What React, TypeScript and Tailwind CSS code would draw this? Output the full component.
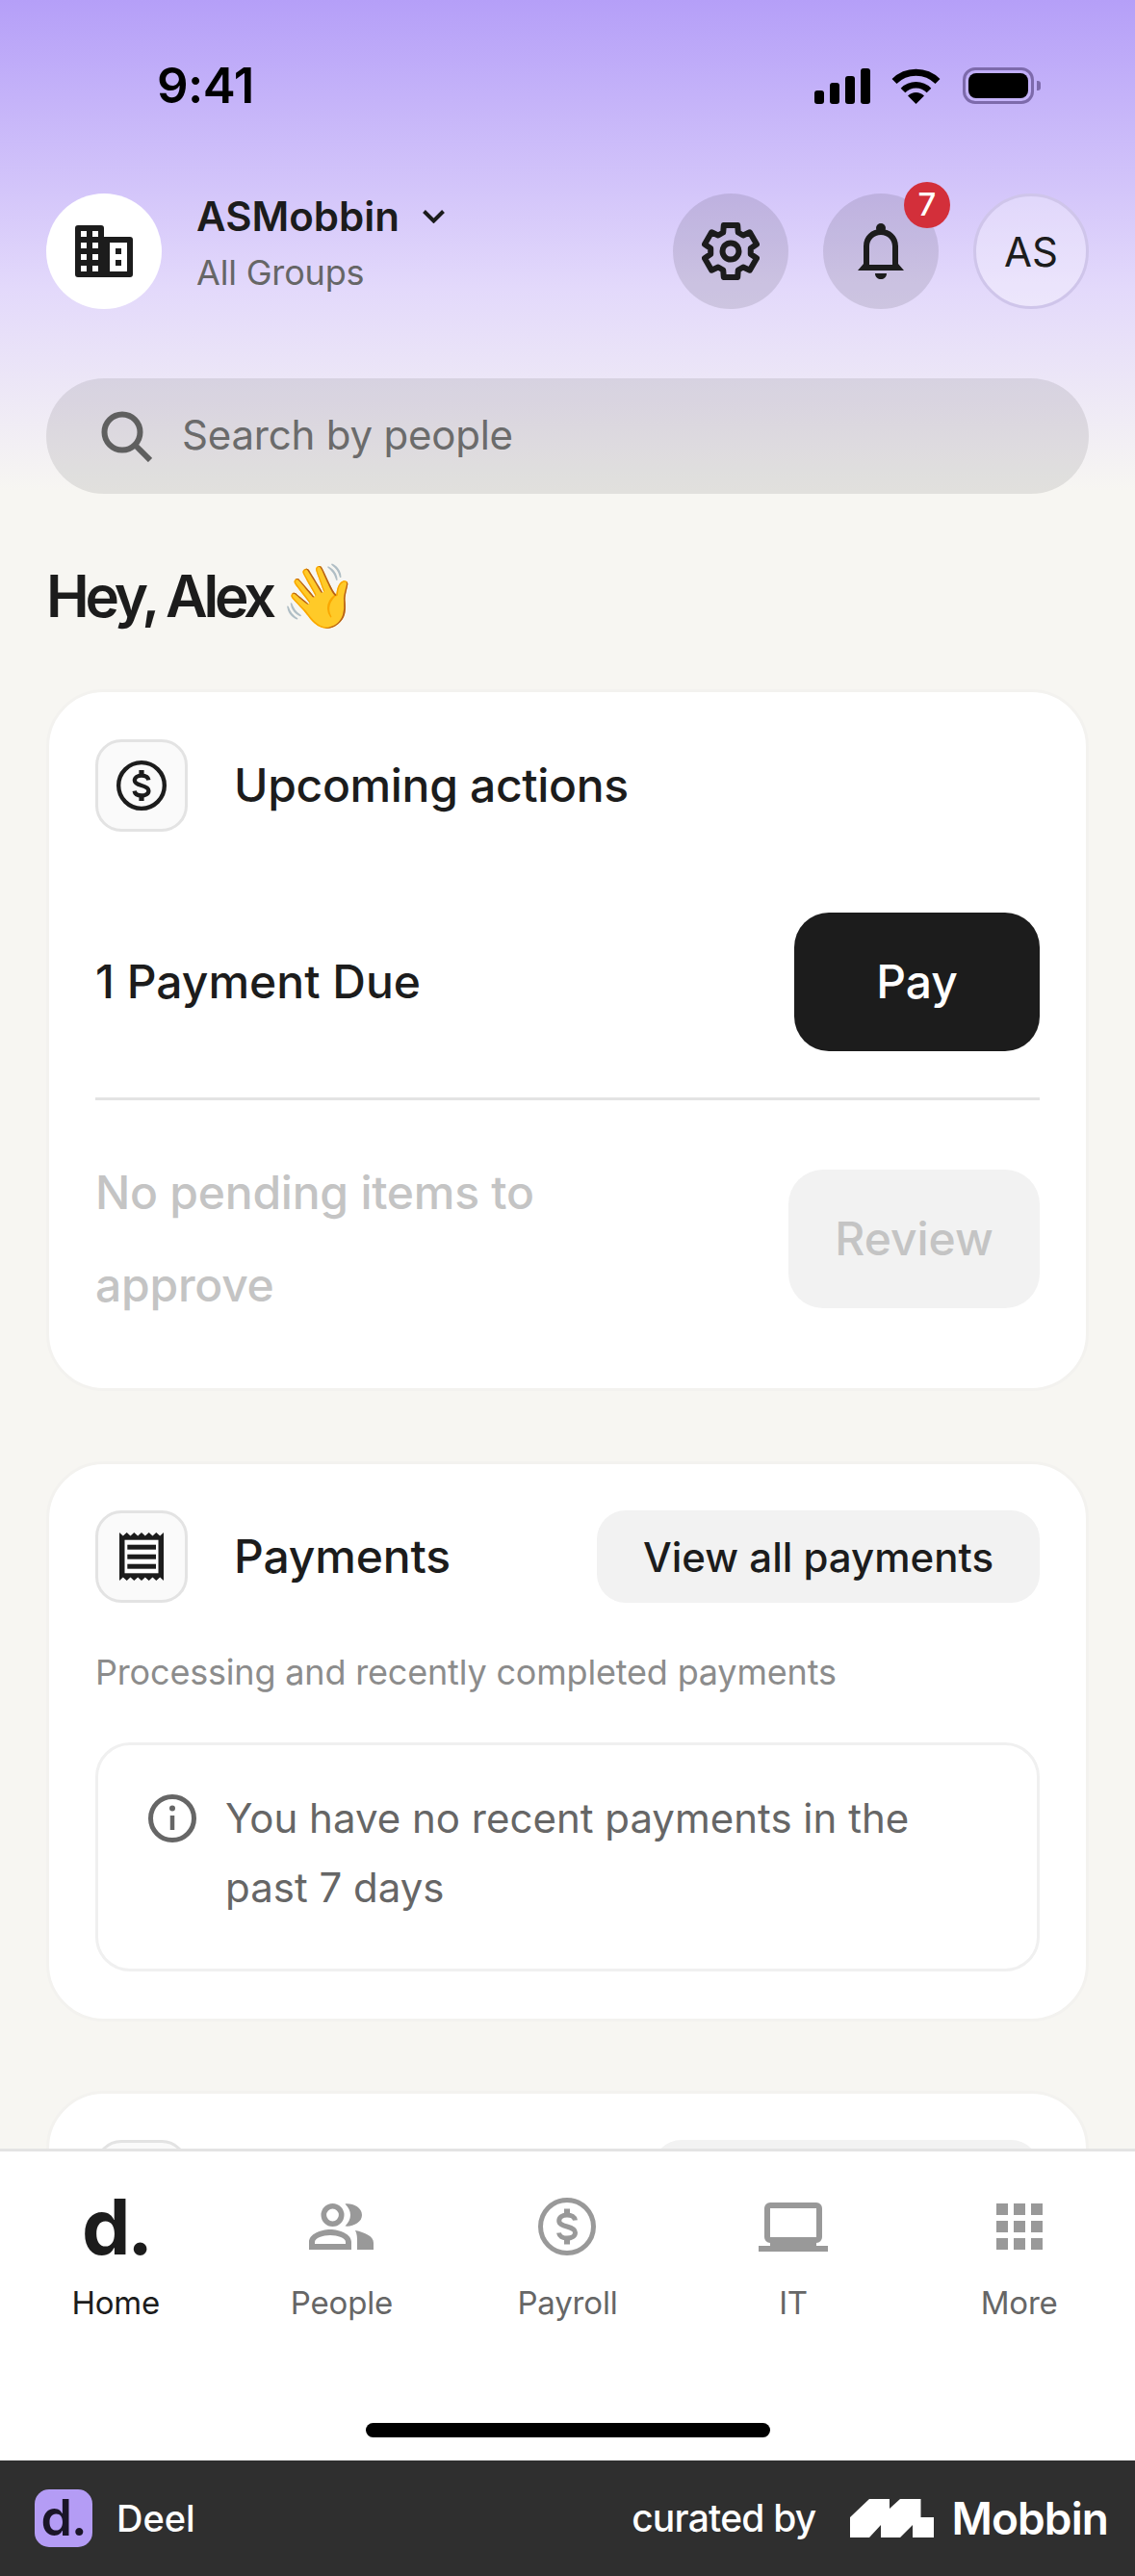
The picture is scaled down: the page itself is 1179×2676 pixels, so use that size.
import React from "react";

const gearPoints = () => {
  const pts: string[] = [];
  const outer = 28;
  const inner = 21;
  for (let i = 0; i < 6; i++) {
    const a = (-90 + i * 60) * (Math.PI / 180);
    const spread = 0.26;
    const spreadIn = 0.38;
    const p = (r: number, t: number) => `${(30 + r * Math.cos(t) * 1.0).toFixed(2)},${(30 + r * Math.sin(t)).toFixed(2)}`;
    pts.push(p(inner, a - spreadIn), p(outer, a - spread), p(outer, a + spread), p(inner, a + spreadIn));
  }
  return pts.join(" ");
};

function Gear() {
  return (
    <svg width="60" height="60" viewBox="0 0 60 60" fill="none" stroke="#1c1c1c" strokeWidth="6" strokeLinejoin="round">
      <polygon points={gearPoints()} />
      <circle cx="30" cy="30" r="8.5" />
    </svg>
  );
}

function Bell() {
  return (
    <svg width="48" height="58" viewBox="0 0 48 58" fill="#1c1c1c">
      <circle cx="24" cy="5" r="5" />
      <path fillRule="evenodd" d="M0 49 L6 42 V24 C6 13 14 6 24 6 C34 6 42 13 42 24 V42 L48 49 Z M12 43 H36 V24 C36 17 31 12 24 12 C17 12 12 17 12 24 Z" />
      <path d="M18 52 H30 C30 56 27 58 24 58 C21 58 18 56 18 52 Z" />
    </svg>
  );
}

function Building() {
  const white: [number, number, number, number][] = [
    [6, 6, 6, 6], [18, 6, 6, 6],
    [6, 18, 6, 6], [18, 18, 6, 6],
    [6, 30, 6, 6], [18, 30, 6, 6],
    [6, 42, 6, 6], [18, 42, 6, 6],
  ];
  return (
    <svg width="60" height="54" viewBox="0 0 60 54">
      <path fill="#1c1c1c" d="M0 3 a3 3 0 0 1 3-3 h24 a3 3 0 0 1 3 3 v9 h27 a3 3 0 0 1 3 3 v36 a3 3 0 0 1-3 3 H3 a3 3 0 0 1-3-3 z" />
      {white.map(([x, y, w, h]) => (
        <rect key={`${x}-${y}`} x={x} y={y} width={w} height={h} fill="#fff" />
      ))}
      <rect x="30" y="18" width="24" height="30" fill="#fff" />
      <rect x="42" y="24" width="6" height="6" fill="#1c1c1c" />
      <rect x="42" y="36" width="6" height="6" fill="#1c1c1c" />
      <rect x="30" y="18" width="6" height="30" fill="#1c1c1c" />
    </svg>
  );
}

function Dollar({ size, color }: { size: number; color: string }) {
  return (
    <svg width={size} height={size} viewBox="0 0 24 24" fill="none" stroke={color}>
      <circle cx="12" cy="12" r="11" strokeWidth="2" />
      <path strokeWidth="2" d="M15.4 9.4 C15.2 8 13.8 7.2 12 7.2 C10.2 7.2 8.7 8.1 8.7 9.6 C8.7 11 10.2 11.5 12 12 C13.8 12.5 15.4 13.1 15.4 14.5 C15.4 16 13.8 16.8 12 16.8 C10.2 16.8 8.8 16 8.6 14.6" />
      <path strokeWidth="2.4" d="M12 4.6 V7.4 M12 16.6 V19.4" />
    </svg>
  );
}

function Receipt() {
  return (
    <svg width="46" height="50" viewBox="0 0 46 50">
      <path fill="#1c1c1c" d="M0 0 L3.8 3.5 L7.7 0 L11.5 3.5 L15.3 0 L19.2 3.5 L23 0 L26.8 3.5 L30.7 0 L34.5 3.5 L38.3 0 L42.2 3.5 L46 0 V50 L42.2 46.5 L38.3 50 L34.5 46.5 L30.7 50 L26.8 46.5 L23 50 L19.2 46.5 L15.3 50 L11.5 46.5 L7.7 50 L3.8 46.5 L0 50 Z" />
      <rect x="5.5" y="7.7" width="35" height="34.6" fill="#fff" />
      <rect x="8.3" y="12.7" width="29.7" height="5" fill="#1c1c1c" />
      <rect x="8.3" y="22.7" width="29.7" height="5" fill="#1c1c1c" />
      <rect x="8.3" y="32.7" width="29.7" height="5" fill="#1c1c1c" />
    </svg>
  );
}

function People() {
  return (
    <svg width="67" height="48" viewBox="0 0 67 48" fill="#999">
      <circle cx="24.5" cy="12" r="9.2" fill="none" stroke="#999" strokeWidth="5.6" />
      <path d="M37.5 0.5 C45 -0.5 55 4 55 12 C55 20 45 24.5 37.5 23.5 C41 20 43 16 43 12 C43 8 41 4 37.5 0.5 Z" />
      <path fillRule="evenodd" d="M0 48 V40 C0 32 12 27 22 27 C32 27 44 32 44 40 V48 Z M6 42 H38 V40 C38 36 30 33 22 33 C14 33 6 36 6 40 Z" />
      <path d="M48 28 C58 30 67 34 67 41 V48 H50 V40 C50 35 50 32 48 28 Z" />
    </svg>
  );
}

function Laptop() {
  return (
    <svg width="72" height="51" viewBox="0 0 72 51" fill="#999">
      <path fillRule="evenodd" d="M12 0 H60 A6 6 0 0 1 66 6 V36 A6 6 0 0 1 60 42 V45 H72 V51 H0 V45 H12 V42 A6 6 0 0 1 6 36 V6 A6 6 0 0 1 12 0 Z M12 6 V36 H60 V6 Z" />
    </svg>
  );
}

function Grid() {
  return (
    <div className="grid grid-cols-3 gap-[6px] w-[48px]">
      {Array.from({ length: 9 }).map((_, i) => (
        <div key={i} className="h-[12px] bg-[#999]" />
      ))}
    </div>
  );
}

function IconBox({ children }: { children: React.ReactNode }) {
  return (
    <div className="w-[96px] h-[96px] shrink-0 rounded-[27px] bg-[#fafafa] border-[3px] border-[#e3e3e3] flex items-center justify-center">
      {children}
    </div>
  );
}

function NavItem({ icon, label, active }: { icon: React.ReactNode; label: string; active?: boolean }) {
  return (
    <div className="flex-1 flex flex-col items-center">
      <div className="h-[60px] flex items-center justify-center">{icon}</div>
      <div className={`mt-[28px] text-[33px] leading-[42px] tracking-[-0.005em] ${active ? "text-[#1c1c1c]" : "text-[#666]"}`}>{label}</div>
    </div>
  );
}

export default function App() {
  return (
    <div className="w-[1179px] h-[2676px] flex flex-col overflow-hidden font-[family-name:Inter,sans-serif] text-[#1c1c1c] bg-white">
      <main className="h-[2232px] shrink-0 overflow-hidden px-[48px] bg-[#f7f6f2] bg-[linear-gradient(180deg,#b59ff8_0px,#e3d9fb_300px,#f7f6f2_510px)]">
        {/* status bar */}
        <div className="h-[201px]">
          <div className="flex items-center justify-between pt-[59px] pl-[115px] h-[119px]">
            <span className="text-[51px] leading-[60px] font-semibold tracking-[-0.01em] text-black">9:41</span>
            <div className="flex items-center">
              <div className="flex items-end gap-[6px] h-[37px]">
                <div className="w-[10px] h-[14px] rounded-[3px] bg-black" />
                <div className="w-[10px] h-[22px] rounded-[3px] bg-black" />
                <div className="w-[10px] h-[29px] rounded-[3px] bg-black" />
                <div className="w-[10px] h-[37px] rounded-[3px] bg-black" />
              </div>
              <svg className="ml-[22px]" width="51" height="37" viewBox="0 0 51 37" fill="none" stroke="#000">
                <path strokeWidth="7" d="M3 13.5 A32 32 0 0 1 48 13.5" />
                <path strokeWidth="6.5" d="M12 23 A19 19 0 0 1 39 23" />
                <path fill="#000" stroke="none" d="M25.5 37 L17 28.5 A12 12 0 0 1 34 28.5 Z" />
              </svg>
              <div className="ml-[23px] w-[74px] h-[38px] rounded-[13px] border-[3px] border-[#7d6aab] p-[3px]">
                <div className="w-full h-full rounded-[8px] bg-black" />
              </div>
              <div className="ml-[3px] w-[4px] h-[10px] rounded-r-[3px] bg-[#7d6aab]" />
              <div className="w-[50px]" />
            </div>
          </div>
        </div>

        {/* header */}
        <div className="flex items-center h-[120px]">
          <div className="w-[120px] h-[120px] rounded-full bg-white flex items-center justify-center">
            <Building />
          </div>
          <div className="ml-[36px] mb-[14px] flex flex-col">
            <div className="flex items-center h-[58px]">
              <span className="text-[42px] leading-[58px] font-semibold">ASMobbin</span>
              <svg className="ml-[24px]" width="23" height="14" viewBox="0 0 23 14" fill="none" stroke="#1c1c1c" strokeWidth="4">
                <path d="M1.5 1.5 L11.5 11.5 L21.5 1.5" />
              </svg>
            </div>
            <span className="text-[36px] leading-[58px] tracking-[-0.005em] text-[#666]">All Groups</span>
          </div>
          <div className="ml-auto flex items-center gap-[36px]">
            <div className="w-[120px] h-[120px] rounded-full bg-black/10 flex items-center justify-center">
              <Gear />
            </div>
            <div className="relative w-[120px] h-[120px] rounded-full bg-black/10 flex items-center justify-center">
              <Bell />
              <div className="absolute left-[84px] top-[-12px] w-[48px] h-[48px] rounded-full bg-[#d32f3a] text-white text-[33px] font-medium flex items-center justify-center">7</div>
            </div>
            <div className="w-[120px] h-[120px] rounded-full bg-white/30 border-[3px] border-[#cfc5ea] flex items-center justify-center text-[42px] font-normal">AS</div>
          </div>
        </div>

        {/* search */}
        <div className="mt-[72px] h-[120px] rounded-full bg-black/[.085] flex items-center pl-[57px]">
          <svg width="53" height="53" viewBox="0 0 53 53" fill="none" stroke="#5f5f5f" strokeWidth="6">
            <circle cx="22" cy="22" r="18.5" />
            <path d="M35 35 L51 51" />
          </svg>
          <span className="ml-[31px] mb-[4px] text-[42px] tracking-[-0.005em] text-[#6b6b6b]">Search by people</span>
        </div>

        {/* greeting */}
        <div className="mt-[61px] flex items-center h-[90px]">
          <span className="text-[60px] leading-[90px] font-semibold tracking-[-0.07em]">Hey, Alex</span>
          <span className="ml-[8px] text-[65px] leading-[90px]">👋</span>
        </div>

        {/* upcoming */}
        <section className="mt-[52px] bg-white border-[3px] border-[#f3f2ef] rounded-[60px] px-[48px] pt-[49px] pb-[59px]">
          <div className="flex items-center">
            <IconBox><Dollar size={52} color="#1c1c1c" /></IconBox>
            <h2 className="ml-[48px] text-[48px] font-[450] tracking-[-0.007em]">Upcoming actions</h2>
          </div>
          <div className="mt-[84px] pb-[48px] border-b-[3px] border-[#e3e3e3] flex items-center justify-between">
            <span className="text-[48px] font-[450]">1 Payment Due</span>
            <div className="w-[255px] h-[144px] rounded-[36px] bg-[#1c1c1c] text-white text-[48px] font-[450] flex items-center justify-center">Pay</div>
          </div>
          <div className="mt-[48px] flex items-center justify-between">
            <p className="w-[560px] text-[48px] leading-[96px] font-[450] tracking-[-0.005em] text-[#c4c4c4]">No pending items to approve</p>
            <div className="w-[261px] h-[144px] rounded-[36px] bg-[#f2f2f2] text-[#c4c4c4] text-[48px] font-[450] flex items-center justify-center">Review</div>
          </div>
        </section>

        {/* payments */}
        <section className="mt-[73px] bg-white border-[3px] border-[#f3f2ef] rounded-[60px] px-[48px] pt-[48px] pb-[49px]">
          <div className="flex items-center">
            <IconBox><Receipt /></IconBox>
            <h2 className="ml-[48px] text-[48px] font-[450] tracking-[-0.003em]">Payments</h2>
            <div className="ml-auto h-[96px] px-[48px] rounded-[30px] bg-[#f2f2f2] text-[42px] font-[450] flex items-center">View all payments</div>
          </div>
          <p className="mt-[48px] text-[36px] leading-[48px] tracking-[-0.005em] text-[#8c8c8c]">Processing and recently completed payments</p>
          <div className="mt-[49px] h-[238px] border-[3px] border-[#f0f0f0] rounded-[36px] flex pl-[52px] pr-[40px] pt-[40px]">
            <svg className="shrink-0 mt-[11px]" width="50" height="50" viewBox="0 0 50 50" fill="none" stroke="#666" strokeWidth="5">
              <circle cx="25" cy="25" r="22.5" />
              <path strokeWidth="4.5" d="M25 22 V37" />
              <circle cx="25" cy="14.5" r="3" fill="#666" stroke="none" />
            </svg>
            <p className="ml-[30px] text-[42px] leading-[72px] text-[#666]">You have no recent payments in the past 7 days</p>
          </div>
        </section>

        {/* clipped next card */}
        <section className="mt-[72px] bg-white border-[3px] border-[#f3f2ef] rounded-[60px] px-[48px] pt-[48px] pb-[49px]">
          <div className="flex items-center justify-between">
            <IconBox><span /></IconBox>
            <div className="w-[402px] h-[96px] rounded-[30px] bg-[#f2f2f2]" />
          </div>
        </section>
      </main>

      {/* tab bar */}
      <nav className="h-[324px] shrink-0 bg-white border-t-[3px] border-[#e3e3e3] flex flex-col justify-between">
        <div className="flex px-[3px] pt-[48px]">
          <NavItem active label="Home" icon={<span className="text-[80px] leading-[60px] font-bold tracking-[-0.04em] text-[#1c1c1c]">d.</span>} />
          <NavItem label="People" icon={<People />} />
          <NavItem label="Payroll" icon={<Dollar size={60} color="#999" />} />
          <NavItem label="IT" icon={<Laptop />} />
          <NavItem label="More" icon={<Grid />} />
        </div>
        <div className="self-center w-[420px] h-[15px] rounded-full bg-black mb-[24px]" />
      </nav>

      {/* footer */}
      <footer className="h-[120px] shrink-0 bg-[#2f2f2f] flex items-center justify-between pl-[36px] pr-[28px] text-white">
        <div className="flex items-center">
          <div className="w-[60px] h-[60px] rounded-[15px] bg-[#b49cf5] text-[#1a1528] text-[52px] leading-[60px] font-semibold tracking-[-0.02em] flex items-center justify-center">d.</div>
          <span className="ml-[25px] text-[38px] font-medium">Deel</span>
        </div>
        <div className="flex items-center">
          <span className="text-[39px] font-medium tracking-[-0.02em]">curated by</span>
          <svg className="ml-[36px]" width="87" height="40" viewBox="0 0 87 40" fill="#fff">
            <polygon points="0,40 0,19 20,0 41,0 41,10 52,0 73.5,0 73.5,19 87,19 87,40 65,40 65,27 52,40 32,40 32,27 20,40" />
          </svg>
          <span className="ml-[18px] text-[46px] font-semibold tracking-[-0.02em]">Mobbin</span>
        </div>
      </footer>
    </div>
  );
}
